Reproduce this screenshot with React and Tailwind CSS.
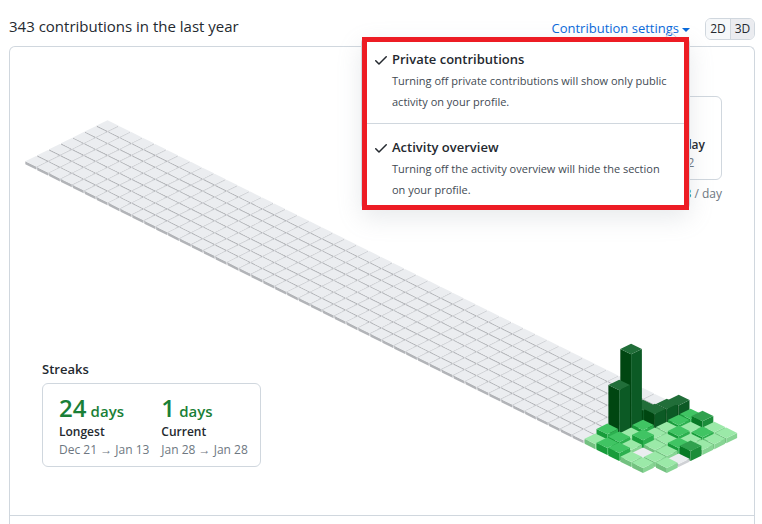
import { useState } from 'react';

// Contribution levels: top, left and right face of each block
const shades = [
  { top: '#ebedf0', left: '#b2b4b8', right: '#cfd1d5' },
  { top: '#9be9a8', left: '#73c180', right: '#87d594' },
  { top: '#40c463', left: '#189c3b', right: '#2cb04f' },
  { top: '#30a14e', left: '#087926', right: '#1c8d3a' },
  { top: '#216e39', left: '#004611', right: '#0c5a25' },
];

const WEEKS = 53;

// Active weeks, each day as [level, height]
const activity = {
  47: [[0, 3], [0, 3], [4, 15], [4, 77], [4, 47], [2, 9], [1, 5]],
  48: [[4, 14], [4, 16], [4, 17], [2, 7], [1, 5], [2, 7], [2, 7]],
  49: [[2, 6], [2, 6], [1, 5], [1, 5], [2, 9], [1, 5], [2, 8]],
  50: [[3, 10], [1, 5], [2, 7], [1, 5], [1, 5], [0, 3], [1, 5]],
  51: [[1, 5], [2, 6], [1, 5], [2, 7], [1, 5], [1, 5], [1, 5]],
  52: [[1, 5], [1, 5], [1, 5], [3, 10], [0, 3], [1, 5]],
};

const emptyWeek = Array(7).fill([0, 3]);

const Block = ({ week, day, level, height }) => {
  const x = 97.5 + 11.9 * (week - day);
  const base = 76.2 + 5.95 * (week + day);
  const y = base - height;
  const w = 10.8;
  const h = 5.3;
  const shade = shades[level];
  return (
    <g>
      <polygon fill={shade.left} points={`${x - w},${y + h} ${x},${y + 2 * h} ${x},${base + 2 * h} ${x - w},${base + h}`} />
      <polygon fill={shade.right} points={`${x + w},${y + h} ${x},${y + 2 * h} ${x},${base + 2 * h} ${x + w},${base + h}`} />
      <polygon fill={shade.top} points={`${x},${y} ${x + w},${y + h} ${x},${y + 2 * h} ${x - w},${y + h}`} />
    </g>
  );
};

const IsometricChart = () => (
  <svg viewBox="0 0 744 468" className="block w-full h-auto" role="img" aria-label="Contributions by day">
    {Array.from({ length: WEEKS }, (_, week) =>
      (activity[week] || emptyWeek).map(([level, height], day) => (
        <Block key={`${week}-${day}`} week={week} day={day} level={level} height={height} />
      ))
    )}
  </svg>
);

const Streak = ({ count, label, range }) => (
  <div>
    <p className="text-[#1a7f37] font-semibold leading-6 whitespace-nowrap">
      <span className="text-2xl leading-6">{count}</span> <span className="text-[15px]">days</span>
    </p>
    <p className="text-xs leading-[18px] font-semibold text-[#24292f]">{label}</p>
    <p className="text-xs leading-[18px] text-[#6e7781] whitespace-nowrap">{range}</p>
  </div>
);

const MenuItem = ({ title, description, checked, onClick, className }) => (
  <button
    type="button"
    role="menuitemcheckbox"
    aria-checked={checked}
    onClick={onClick}
    className={`flex w-full items-start gap-[3px] pl-1.5 pr-3 text-left ${className}`}
  >
    <svg viewBox="0 0 16 16" className={`mt-[3px] size-4 shrink-0 ${checked ? '' : 'invisible'}`} fill="#24292f">
      <path d="M13.78 4.22a.75.75 0 0 1 0 1.06l-7.25 7.25a.75.75 0 0 1-1.06 0L2.22 9.28a.75.75 0 1 1 1.06-1.06L6 10.94l6.72-6.72a.75.75 0 0 1 1.06 0z" />
    </svg>
    <span className="block">
      <span className="block text-[13px] leading-[21px] font-semibold text-[#24292f]">{title}</span>
      <span className="block text-[11px] leading-[21px] text-[#424a53]">{description}</span>
    </span>
  </button>
);

const App = () => {
  const [open, setOpen] = useState(true);
  const [view, setView] = useState('3D');
  const [showPrivate, setShowPrivate] = useState(true);
  const [showOverview, setShowOverview] = useState(true);

  return (
    <div className="flex min-h-screen flex-col bg-white pl-[9px] pr-[7px] font-['Open_Sans','Noto_Sans',sans-serif] text-[#24292f]">
      {/* Header */}
      <header className="flex items-start justify-between pt-[13px] pb-1.5">
        <h2 className="text-[15px] leading-[27px]">343 contributions in the last year</h2>
        <div className="flex items-end gap-[15px] pt-[3px]">
          <div className="relative">
            <button
              type="button"
              aria-haspopup="menu"
              aria-expanded={open}
              onClick={() => setOpen(!open)}
              className="flex items-center gap-[3px] text-[13px] leading-6 text-[#0969da]"
            >
              Contribution settings
              <span className="mt-1 border-x-4 border-t-4 border-x-transparent border-t-[#0969da]" />
            </button>

            {open && (
              <div
                role="menu"
                className="absolute top-[21px] right-0 z-10 w-[329px] rounded-md border-x border-[#d0d7de] bg-white shadow-[0_8px_24px_rgba(140,149,159,0.2)]"
              >
                <span className="absolute -top-1 right-[14px] size-2 rotate-45 border-t border-l border-[#d0d7de]" />
                <div className="relative border-[5px] border-[#ed1c24] bg-white">
                  <MenuItem
                    title="Private contributions"
                    description="Turning off private contributions will show only public activity on your profile."
                    checked={showPrivate}
                    onClick={() => setShowPrivate(!showPrivate)}
                    className="border-b border-[#d0d7de] pt-[7px] pb-[11px]"
                  />
                  <MenuItem
                    title="Activity overview"
                    description="Turning off the activity overview will hide the section on your profile."
                    checked={showOverview}
                    onClick={() => setShowOverview(!showOverview)}
                    className="pt-[13px] pb-[5px]"
                  />
                </div>
              </div>
            )}
          </div>

          <div className="flex h-[22px] overflow-hidden rounded-md border border-[#d0d7de] text-xs font-medium">
            {['2D', '3D'].map((name) => (
              <button
                key={name}
                type="button"
                aria-pressed={view === name}
                onClick={() => setView(name)}
                className={`w-6 border-[#d0d7de] not-first:border-l ${view === name ? 'bg-[#ebecf0]' : 'bg-[#f6f8fa]'}`}
              >
                {name}
              </button>
            ))}
          </div>
        </div>
      </header>

      {/* Calendar card */}
      <main className="flex-1 rounded-t-md border-x border-t border-[#d0d7de]">
        <div className="relative">
          <IsometricChart />

          <section className="absolute top-[49px] right-8 flex flex-col items-end">
            <div className="rounded-md border border-[#d0d7de] px-4 pt-2 pb-[7px]">
              <div className="pt-[31px] text-xs leading-[18px]">
                <p className="font-semibold">Busiest day</p>
                <p className="text-[#6e7781]">October 2</p>
              </div>
            </div>
            <p className="mt-[5px] text-xs leading-[18px] text-[#6e7781]">
              Average: <span className="font-semibold text-[#1a7f37]">0.93</span> / day
            </p>
          </section>

          <section className="absolute bottom-12 left-8">
            <h3 className="mb-1 text-[13px] leading-5 font-semibold">Streaks</h3>
            <div className="flex gap-3 rounded-md border border-[#d0d7de] pt-3 pr-3 pb-[7px] pl-4">
              <Streak count={24} label="Longest" range="Dec 21 → Jan 13" />
              <Streak count={1} label="Current" range="Jan 28 → Jan 28" />
            </div>
          </section>
        </div>
        <div className="border-t border-[#d0d7de]" />
      </main>
    </div>
  );
};

export default App;
